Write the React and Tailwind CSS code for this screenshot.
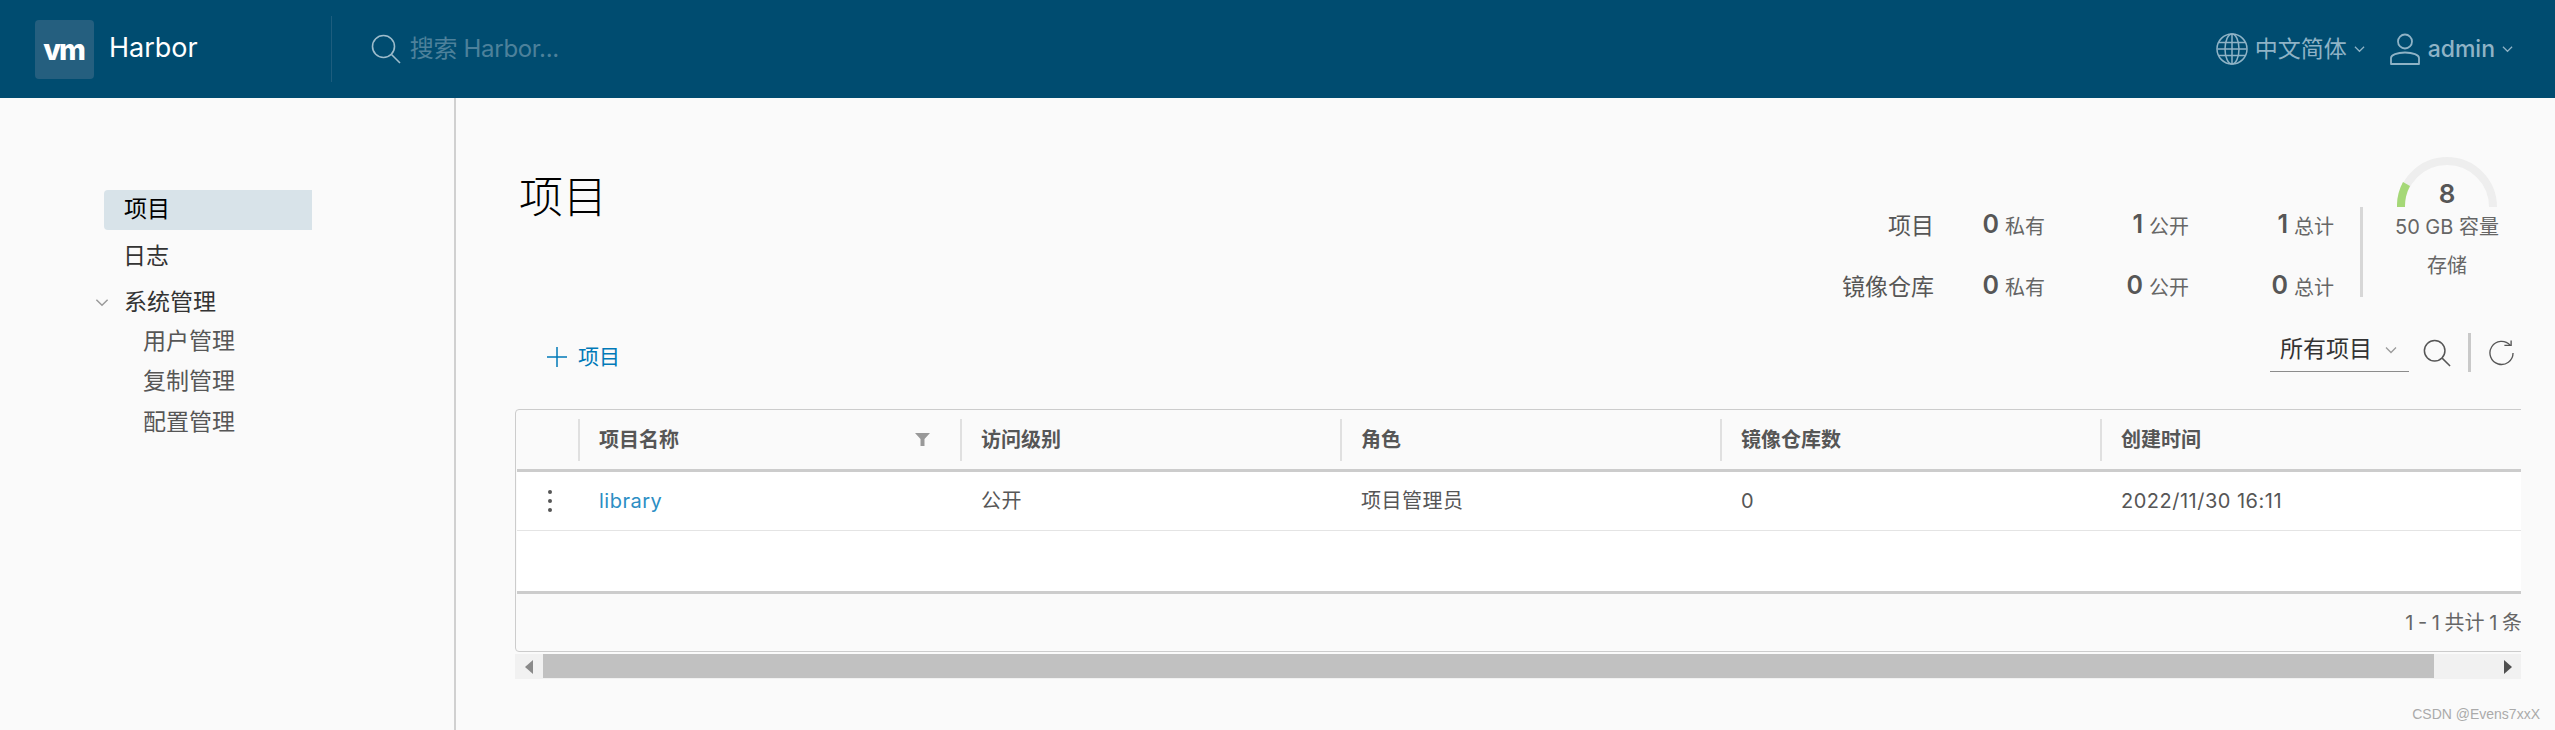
import React from "react";

const Chevron = ({ className }) => (
  <svg viewBox="0 0 12 8" className={className} fill="none" stroke="currentColor" strokeWidth="1.3">
    <path d="M1 1.5 L6 6.5 L11 1.5" />
  </svg>
);

const SearchIcon = ({ className }) => (
  <svg viewBox="0 0 30 30" className={className} fill="none" stroke="currentColor" strokeWidth="1.6">
    <circle cx="12.5" cy="12.5" r="11" />
    <path d="M20.5 20.5 L29 29" />
  </svg>
);

const GlobeIcon = ({ className }) => (
  <svg viewBox="0 0 32 32" className={className} fill="none" stroke="currentColor" strokeWidth="1.5">
    <circle cx="16" cy="16" r="15" />
    <ellipse cx="16" cy="16" rx="7" ry="15" />
    <path d="M16 1 V31 M3 9.5 H29 M3 22.5 H29 M1.5 16 H30.5" />
  </svg>
);

const UserIcon = ({ className }) => (
  <svg viewBox="0 0 30 32" className={className} fill="none" stroke="currentColor" strokeWidth="1.8">
    <circle cx="15" cy="8.5" r="7" />
    <path d="M1 31 V25 C1 22 7 19.5 15 19.5 C23 19.5 29 22 29 25 V31 Z" strokeLinejoin="round" />
  </svg>
);

const Stat = ({ num, label }) => (
  <div className="flex items-center justify-end gap-[6px]">
    <span className="-mt-[4px] text-[25px] font-semibold leading-none text-[#565656]">{num}</span>
    <span className="text-[20px] leading-none text-[#666]">{label}</span>
  </div>
);

const columns = [
  { title: "访问级别", value: "公开" },
  { title: "角色", value: "项目管理员" },
  { title: "镜像仓库数", value: "0" },
  { title: "创建时间", value: "2022/11/30 16:11" },
];

const Header = () => (
  <header className="flex h-[98px] items-center bg-[#004c70] text-[#8fb3c6]">
    <div className="ml-[35px] flex h-[59px] w-[59px] items-center justify-center rounded-[4px] bg-[#255f7f] pr-[2px] text-[29px] leading-none font-extrabold tracking-[-2px] text-white">
      vm
    </div>
    <span className="ml-[15px] pb-[2px] text-[27px] text-white">Harbor</span>
    <div className="ml-[133px] h-[66px] w-px bg-[#1d5d7e]" />
    <SearchIcon className="ml-[39px] h-[30px] w-[30px] text-[#9dbccb]" />
    <span className="ml-[9px] text-[24px] tracking-[-0.3px] text-[#4d819b]">搜索 Harbor...</span>
    <div className="ml-auto flex items-center">
      <GlobeIcon className="h-[32px] w-[32px]" />
      <span className="ml-[7px] text-[23px]">中文简体</span>
      <Chevron className="ml-[7px] h-[8px] w-[11px]" />
      <UserIcon className="ml-[25px] h-[32px] w-[30px]" />
      <span className="ml-[8px] text-[23px] font-medium">admin</span>
      <Chevron className="ml-[7px] mr-[42px] h-[8px] w-[11px]" />
    </div>
  </header>
);

const Sidebar = () => (
  <aside className="w-[456px] shrink-0 border-r-2 border-[#d0d0d0] pt-[92px] text-[23px] leading-none">
    <div className="ml-[104px] flex h-[40px] w-[208px] items-center rounded-l-[4px] bg-[#d8e3e9] pb-[2px] pl-[20px] text-[#000]">项目</div>
    <div className="ml-[123px] mt-[7px] flex h-[40px] items-center pb-[2px] text-[#333]">日志</div>
    <div className="mt-[5px] flex h-[40px] items-center text-[#333]">
      <Chevron className="ml-[95px] h-[9px] w-[14px] text-[#9a9a9a]" />
      <span className="ml-[15px]">系统管理</span>
    </div>
    <div className="ml-[143px] flex h-[40px] items-center pb-[2px] text-[#565656]">用户管理</div>
    <div className="ml-[143px] flex h-[40px] items-center pb-[2px] text-[#565656]">复制管理</div>
    <div className="ml-[143px] flex h-[40px] items-center text-[#565656]">配置管理</div>
  </aside>
);

const Summary = () => (
  <div className="flex items-start">
    <div className="mt-[39px] grid grid-cols-[92px_111px_144px_145px] grid-rows-[61px_61px] items-center">
      <div className="text-right text-[23px] text-[#565656]">项目</div>
      <Stat num="0" label="私有" />
      <Stat num="1" label="公开" />
      <Stat num="1" label="总计" />
      <div className="text-right text-[23px] text-[#565656]">镜像仓库</div>
      <Stat num="0" label="私有" />
      <Stat num="0" label="公开" />
      <Stat num="0" label="总计" />
    </div>
    <div className="ml-[26px] mt-[50px] h-[90px] w-[3px] bg-[#d7d7d7]" />
    <div className="ml-[24px] mr-[14px] flex w-[120px] flex-col items-center">
      <div className="relative h-[50px] w-[100px]">
        <svg viewBox="0 0 100 50" className="h-[50px] w-[100px]" fill="none" strokeWidth="8">
          <path d="M4 50 A46 46 0 0 1 96 50" stroke="#eeeeee" />
          <path d="M4 50 A46 46 0 0 1 9.5 27" stroke="#a5d877" />
        </svg>
        <span className="absolute -bottom-[4px] left-0 right-0 text-center text-[26px] font-semibold leading-[34px] text-[#565656]">8</span>
      </div>
      <div className="mt-[8px] whitespace-nowrap text-[20px] leading-[24px] text-[#666]">50 GB 容量</div>
      <div className="mt-[15px] text-[20px] leading-[24px] text-[#666]">存储</div>
    </div>
  </div>
);

const Toolbar = () => (
  <div className="mt-[12px] flex h-[45px] items-center">
    <svg viewBox="0 0 20 20" className="ml-[32px] mt-[8px] h-[20px] w-[20px] text-[#0079b8]" fill="none" stroke="currentColor" strokeWidth="1.5">
      <path d="M10 0 V20 M0 10 H20" />
    </svg>
    <span className="ml-[11px] mt-[9px] text-[21px] text-[#0079b8]">项目</span>
    <div className="ml-auto flex h-[39px] w-[139px] items-center border-b border-[#8c8c8c] pb-[5px] pl-[10px] text-[23px] text-[#333]">
      所有项目
      <Chevron className="ml-[12px] h-[8px] w-[14px] text-[#9a9a9a]" />
    </div>
    <SearchIcon className="ml-[13px] h-[28px] w-[30px] text-[#565656]" />
    <div className="ml-[16px] h-[39px] w-[3px] bg-[#c9c9c9]" />
    <svg viewBox="0 0 26 26" className="ml-[18px] mr-[7px] h-[26px] w-[25px] text-[#565656]" fill="none" stroke="currentColor" strokeWidth="1.4">
      <path d="M22 5 A12 12 0 1 0 25 13" />
      <path d="M16 5 H23 V0" />
    </svg>
  </div>
);

const Datagrid = () => (
  <div className="mt-[34px] w-[2006px] overflow-hidden">
    <div className="w-[2100px] rounded-[4px] border border-[#ccc] pl-px">
      <div className="flex h-[59px] items-center text-[20px] font-bold text-[#565656]">
        <div className="w-[61px]" />
        <div className="flex h-[42px] w-[382px] items-center border-l-2 border-[#e0e0e0] pl-[19px]">
          项目名称
          <svg viewBox="0 0 15 13" className="ml-auto mr-[30px] h-[13px] w-[15px] text-[#999]" fill="currentColor">
            <path d="M0 0 H15 L9.5 6 V13 H5.5 V6 Z" />
          </svg>
        </div>
        {columns.map((col) => (
          <div key={col.title} className="flex h-[42px] w-[380px] items-center border-l-2 border-[#e0e0e0] pl-[19px]">
            {col.title}
          </div>
        ))}
      </div>
      <div className="border-y-[3px] border-[#ccc] bg-white">
        <div className="flex h-[59px] items-center border-b border-[#e4e4e4] text-[20px] tracking-[0.5px] text-[#565656]">
          <div className="flex w-[61px] justify-center pl-[5px]">
            <svg viewBox="0 0 6 24" className="h-[24px] w-[6px] fill-[#565656]">
              <circle cx="3" cy="3" r="2" />
              <circle cx="3" cy="12" r="2" />
              <circle cx="3" cy="21" r="2" />
            </svg>
          </div>
          <div className="w-[382px] pl-[21px] text-[#2b8ec4]">library</div>
          {columns.map((col) => (
            <div key={col.title} className="w-[380px] pl-[21px]">{col.value}</div>
          ))}
        </div>
        <div className="h-[60px]" />
      </div>
      <div className="flex h-[57px] w-[2004px] items-center justify-end whitespace-nowrap text-[20px] text-[#666] [word-spacing:-1px]">
        <span className="mr-[-1px]">1 - 1 共计 1 条</span>
      </div>
    </div>
    <div className="mt-[2px] flex h-[25px] items-center bg-[#f1f1f1]">
      <div className="ml-[10px] h-0 w-0 border-y-[7px] border-r-[8px] border-y-transparent border-r-[#8a8a8a]" />
      <div className="ml-[10px] h-[24px] w-[1891px] self-start bg-[#c1c1c1]" />
      <div className="ml-[70px] h-0 w-0 border-y-[7px] border-l-[8px] border-y-transparent border-l-[#505050]" />
    </div>
  </div>
);

export default function App() {
  return (
    <div className="relative flex h-[730px] w-[2555px] flex-col overflow-hidden bg-[#fafafa] font-[Inter,'Noto_Sans_CJK_SC',sans-serif]">
      <Header />
      <div className="flex flex-1">
        <Sidebar />
        <main className="w-[2065px] pl-[59px] pt-[59px]">
          <div className="flex w-[2006px] items-start justify-between">
            <h1 className="ml-[4px] mt-[9px] text-[44px] font-light leading-[62px] text-[#000]">项目</h1>
            <Summary />
          </div>
          <Toolbar />
          <Datagrid />
        </main>
      </div>
      <div className="absolute bottom-[7px] right-[15px] font-['Liberation_Sans',sans-serif] text-[14px] leading-[18px] text-[#aaa]">CSDN @Evens7xxX</div>
    </div>
  );
}
